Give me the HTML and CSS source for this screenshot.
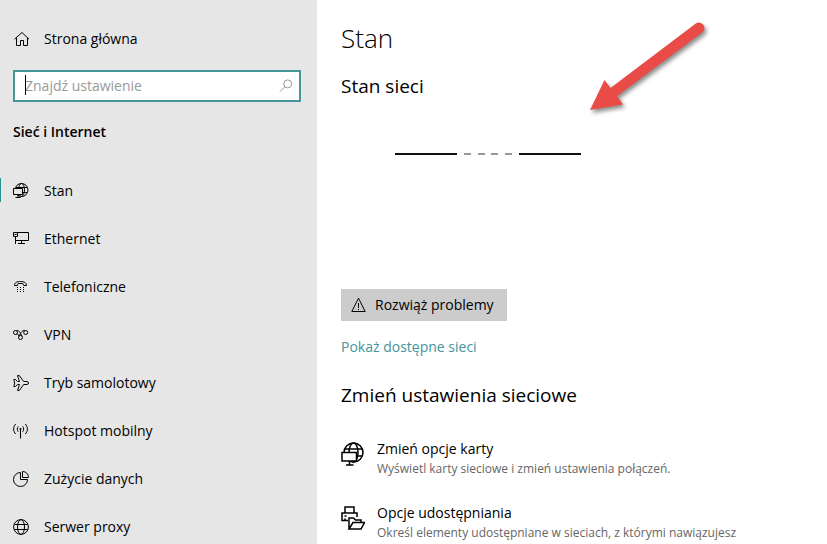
FILE: index.html
```
<!DOCTYPE html>
<html lang="pl">
  <head>
    <meta charset="UTF-8" />
    <meta name="viewport" content="width=device-width, initial-scale=1.0" />
    <title>Ustawienia</title>
    <link rel="stylesheet" href="styles.css">
  </head>

  <body>
    <div class="root">
      <aside class="sidebar">
        <a class="item home" href="#">
          <svg class="icon" viewBox="0 0 16 16">
            <path d="M1.500 8.200 9 1.500l7 6.700M3.500 7v7.500h4V9.500h3v5h4V7" />
          </svg>
          <span>Strona główna</span>
        </a>

        <div class="search">
          <input id="search" type="text" placeholder="Znajdź ustawienie" aria-label="Znajdź ustawienie" />
          <span class="caret"></span>
          <svg class="search-icon" viewBox="0 0 14 14">
            <circle cx="8.7" cy="4.9" r="4" />
            <path d="M5.8 7.8 1 12.6" />
          </svg>
        </div>

        <h2 class="category">Sieć i Internet</h2>

        <nav class="menu">
          <a class="item active" href="#">
            <svg class="icon" viewBox="0 0 16 16">
              <circle cx="8.500" cy="7" r="6.500" />
              <ellipse cx="8.500" cy="7" rx="3" ry="6.500" />
              <path d="M3 4.500h11M3 9.500h11" />
              <path class="screen" d="M.5 5.500h9v6h-9z" />
              <path d="M5 11.500v3M2.500 14.500h5" />
            </svg>
            <span>Stan</span>
          </a>
          <a class="item" href="#">
            <svg class="icon" viewBox="0 0 16 16">
              <path d="M4.500 1.500h11v8h-13M8.500 9.500v3M5 12.500h7M.5 1.500h4v4h-4zM2.500 5.500v7.500M1.500 3.500h2" />
            </svg>
            <span>Ethernet</span>
          </a>
          <a class="item" href="#">
            <svg class="icon" viewBox="0 0 16 16">
              <path d="M1.500 6.500C1.500 3.500 4 2.500 7.500 2.500s6 1 6 4H10.700l-.9-2h-4.600l-.9 2z" />
              <path class="dots" d="M4 8h1v1H4zM7 8h1v1H7zM10 8h1v1h-1zM4 10h1v1H4zM7 10h1v1H7zM10 10h1v1h-1zM4 12h1v1H4zM7 12h1v1H7zM10 12h1v1h-1z" />
            </svg>
            <span>Telefoniczne</span>
          </a>
          <a class="item" href="#">
            <svg class="icon" viewBox="0 0 16 16">
              <circle cx="2.500" cy="5.500" r="2" />
              <circle cx="12.700" cy="5.500" r="2" />
              <circle cx="7.500" cy="10.500" r="2" />
              <path d="M3.500 3.700c1.500-.6 2.500.3 3.300 1.500l2.300 4M5.900 9.300 8.300 5.200c.9-1.200 2-2.100 3.500-1.500M4.200 6.600l2 2.400" />
            </svg>
            <span>VPN</span>
          </a>
          <a class="item" href="#">
            <svg class="icon" viewBox="0 0 16 16">
              <path d="M.8 4.500h1.700l2 2h2L4.500.6h1.900l4.200 5.900h3.500c1.800 0 1.800 3 0 3h-3.500L6.400 15.400H4.500l2-5.900h-2l-2 2H.8L1.700 8z" />
            </svg>
            <span>Tryb samolotowy</span>
          </a>
          <a class="item" href="#">
            <svg class="icon" viewBox="0 0 16 16">
              <path d="M7.500 5.500v10M5.300 3.300c-1.300 1.500-1.300 4 0 5.500M9.700 3.300c1.300 1.500 1.300 4 0 5.500M2.700 1C-.1 3.800-.1 8.200 2.700 11M12.300 1c2.800 2.800 2.800 7.200 0 10" />
              <circle class="dots" cx="7.500" cy="6" r="1" />
            </svg>
            <span>Hotspot mobilny</span>
          </a>
          <a class="item" href="#">
            <svg class="icon" viewBox="0 0 16 16">
              <path d="M7.500 1.500a7 7 0 1 0 7 7h-7zM9.500.5v6h6c0-3.400-2.600-6-6-6z" />
            </svg>
            <span>Zużycie danych</span>
          </a>
          <a class="item" href="#">
            <svg class="icon" viewBox="0 0 16 16">
              <circle cx="8" cy="8" r="7.400" />
              <ellipse cx="8" cy="8" rx="3.500" ry="7.400" />
              <path d="M1.400 5.500h13.200M1.400 10.500h13.200" />
            </svg>
            <span>Serwer proxy</span>
          </a>
        </nav>
      </aside>

      <main class="main">
        <h1>Stan</h1>
        <h2 class="section">Stan sieci</h2>

        <div class="diagram">
          <span class="line"></span>
          <span class="gap">
            <span class="dash"></span>
            <span class="dash"></span>
            <span class="dash"></span>
            <span class="dash"></span>
          </span>
          <span class="line"></span>
        </div>

        <button class="troubleshoot" type="button">
          <svg class="icon" viewBox="0 0 16 16">
            <path d="M7.500 1.200.8 14.500h13.400zM7.500 6v5M7.500 12v1" />
          </svg>
          <span>Rozwiąż problemy</span>
        </button>

        <a class="link" href="#">Pokaż dostępne sieci</a>

        <h2 class="section change">Zmień ustawienia sieciowe</h2>

        <a class="option" href="#">
          <svg class="option-icon" viewBox="0 0 24 24">
            <circle cx="12.500" cy="10.500" r="9.500" />
            <ellipse cx="12.500" cy="10.500" rx="4.500" ry="9.500" />
            <path d="M4 7h17M4 14h17" />
            <path class="screen" d="M1 10.500h14.500v8.500H1z" />
            <path d="M8.500 19v4M5 23h7.500" />
          </svg>
          <span class="text">
            <span class="title">Zmień opcje karty</span>
            <span class="desc">Wyświetl karty sieciowe i zmień ustawienia połączeń.</span>
          </span>
        </a>

        <a class="option" href="#">
          <svg class="option-icon" viewBox="0 0 24 24">
            <path d="M4 7V1h9v6M7 14.500H1V7h15v4M3.500 10h2M4 14.500v-2" />
            <path class="screen" d="M8 23V12h4.500l2 2H20v2.500M8 23l4-6.500h11.500L20 23z" />
          </svg>
          <span class="text">
            <span class="title">Opcje udostępniania</span>
            <span class="desc">Określ elementy udostępniane w sieciach, z którymi nawiązujesz</span>
          </span>
        </a>

        <svg class="arrow" viewBox="0 0 130 105">
          <path d="M118.300 12.800a5.500 5.500 0 0 0-7.500-1.200L25.500 76 19.500 68 5 98l33-5.500-6-8.500L116.500 21a5.500 5.500 0 0 0 1.800-8.200z" />
        </svg>
      </main>
    </div>
  </body>
</html>
```
FILE: styles.css
```
* {
  box-sizing: border-box;
}

html,
body {
  height: 100%;
  margin: 0;
}

body {
  font-family: "Open Sans", "Noto Sans", sans-serif;
  font-size: 14px;
  line-height: 20px;
  color: #000;
  background-color: #fff;
}

h1,
h2 {
  margin: 0;
  font-weight: 400;
}

a {
  color: inherit;
  text-decoration: none;
}

svg {
  flex: none;
  fill: none;
  stroke: currentColor;
}

.root {
  display: flex;
  height: 100%;
  overflow: hidden;
}

.sidebar {
  flex: none;
  width: 317px;
  padding-top: 15px;
  background-color: #e6e6e6;
}

.item {
  display: flex;
  align-items: center;
  gap: 15px;
  height: 48px;
  padding-left: 13px;
}

.icon {
  width: 16px;
  height: 16px;
}

.dots {
  fill: currentColor;
  stroke: none;
}

.screen {
  fill: #fff;
}

.sidebar .screen {
  fill: #e6e6e6;
}

.search {
  position: relative;
  margin: 7px 16px 0 13px;
}

.search input {
  display: block;
  width: 100%;
  height: 32px;
  padding: 0 32px 2px 10px;
  border: 2px solid #45959b;
  border-radius: 0;
  outline: none;
  font: inherit;
  background-color: #fff;
}

.search input::placeholder {
  color: #999;
  opacity: 1;
}

.caret {
  position: absolute;
  top: 5px;
  left: 12px;
  width: 1px;
  height: 20px;
  background-color: #000;
}

.search-icon {
  position: absolute;
  top: 9px;
  right: 8px;
  width: 14px;
  height: 14px;
  color: #999;
}

.category {
  margin: 20px 13px 25px;
  font-size: 14px;
  font-weight: 600;
}

.active {
  position: relative;
}

.active::before {
  content: "";
  position: absolute;
  top: 11px;
  left: 0;
  width: 1px;
  height: 24px;
  background-color: #2b8f96;
}

.main {
  position: relative;
  flex: 1;
  min-width: 0;
  padding: 20px 24px 0;
}

h1 {
  font-size: 26px;
  font-weight: 300;
  line-height: 36px;
}

.section {
  font-size: 19px;
  line-height: 28px;
}

h1 + .section {
  margin-top: 16px;
}

.diagram {
  display: flex;
  align-items: center;
  height: 108px;
  margin-bottom: 81px;
  padding-left: 54px;
}

.line {
  width: 62px;
  height: 2px;
  background-color: #111;
}

.gap {
  display: flex;
  justify-content: space-between;
  width: 62px;
  padding: 0 7px;
}

.dash {
  width: 7px;
  height: 2px;
  background-color: #999;
}

.troubleshoot {
  display: flex;
  align-items: center;
  gap: 8px;
  height: 32px;
  padding: 0 13px 0 10px;
  border: 0;
  font: inherit;
  color: #000;
  background-color: #ccc;
}

.link {
  display: block;
  margin-top: 16px;
  color: #45959b;
}

.change {
  margin: 24px 0 30px;
}

.option {
  display: flex;
  gap: 12px;
  margin-bottom: 24px;
}

.option-icon {
  width: 24px;
  height: 24px;
  margin-top: 3px;
  stroke-width: 1.5;
}

.text {
  display: flex;
  flex-direction: column;
}

.desc {
  font-size: 12px;
  white-space: nowrap;
  color: #666;
}

/* pointer drawn over the network diagram */
.arrow {
  position: absolute;
  top: 12px;
  left: 268px;
  width: 130px;
  height: 105px;
  fill: #e94b47;
  stroke: none;
  filter: drop-shadow(2px 3px 2px rgba(0, 0, 0, 0.45));
}
```
